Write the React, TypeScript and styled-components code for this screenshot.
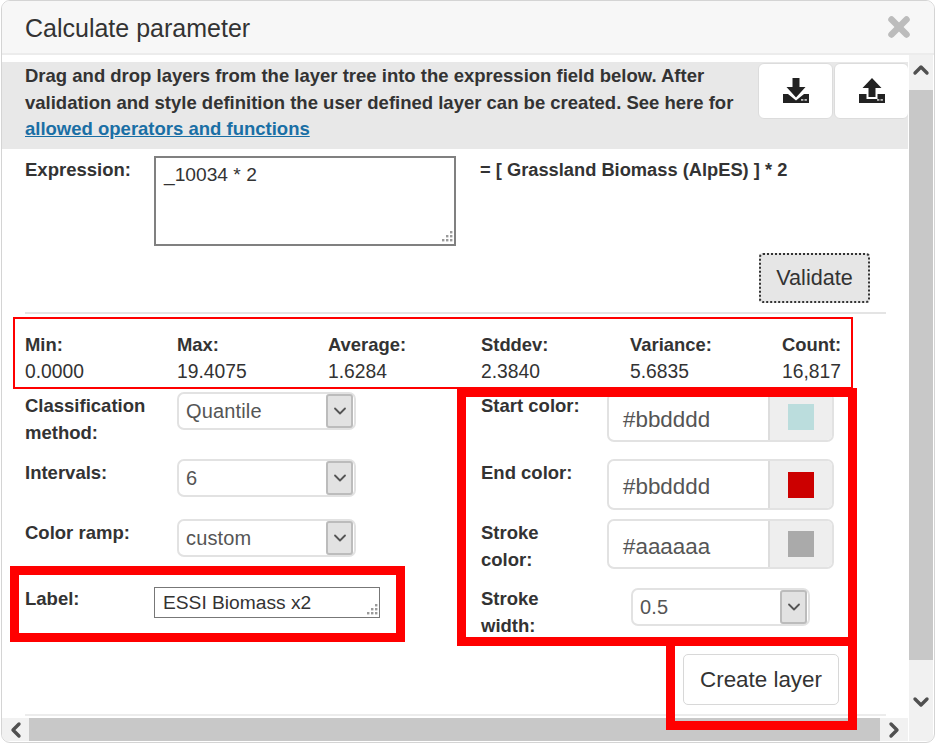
import React from "react";
import styled, { createGlobalStyle } from "styled-components";
import { ChevronDown, ChevronLeft, ChevronRight, ChevronUp, X } from "lucide-react";

const GlobalStyle = createGlobalStyle`
  html, body {
    margin: 0;
    background: #fff;
  }
  body {
    font-family: "Liberation Sans", Arial, sans-serif;
    color: #333;
  }
`;

const stats = [
  ["Min:", "0.0000"],
  ["Max:", "19.4075"],
  ["Average:", "1.6284"],
  ["Stddev:", "2.3840"],
  ["Variance:", "5.6835"],
  ["Count:", "16,817"],
];

function ResizeHandle() {
  return (
    <Handle viewBox="0 0 14 14" width="14" height="14">
      {[[11, 2], [7, 6], [11, 6], [3, 10], [7, 10], [11, 10]].map(([x, y]) => (
        <rect key={`${x}-${y}`} x={x} y={y} width="2.4" height="2.4" fill="#9a9a9a" />
      ))}
    </Handle>
  );
}

function TrayIcon({ up }: { up?: boolean }) {
  return (
    <svg viewBox="0 0 26 26" width="26" height="26">
      {up ? (
        <>
          <path d="M13 0 L22.5 10 H16.5 V19 H9.5 V10 H3.5 Z" fill="#222" />
          <path d="M0 16 H7.5 V21 H18.5 V16 H26 V25 H0 Z" fill="#222" />
        </>
      ) : (
        <>
          <path d="M9.5 0 H16.5 V9 H22.5 L13 19.5 L3.5 9 H9.5 Z" fill="#222" />
          <path d="M0 16 H5 L13 22.5 L21 16 H26 V25 H0 Z" fill="#222" />
        </>
      )}
      <rect x="18" y="21" width="2.4" height="1.8" fill="#bbb" />
      <rect x="21.5" y="21" width="2.4" height="1.8" fill="#bbb" />
    </svg>
  );
}

function Select({ value, width }: { value: string; width: number }) {
  return (
    <SelectBox style={{ width }}>
      <SelectValue>{value}</SelectValue>
      <SelectArrow>
        <ChevronDown size={20} strokeWidth={2.2} color="#555" />
      </SelectArrow>
    </SelectBox>
  );
}

function ColorInput({ value, color, height }: { value: string; color: string; height: number }) {
  return (
    <ColorGroup $height={height}>
      <ColorValue>{value}</ColorValue>
      <ColorAddon>
        <Swatch $color={color} />
      </ColorAddon>
    </ColorGroup>
  );
}

export default function App() {
  return (
    <Page>
      <GlobalStyle />
      <Modal>
        <Header>
          <Title>Calculate parameter</Title>
          <CloseIcon>
            <X size={30} strokeWidth={5.2} color="#bcbcbc" />
          </CloseIcon>
        </Header>
        <Body>
          <Main>
            <Content>
              <Intro>
                <IntroText>
                  Drag and drop layers from the layer tree into the expression field below. After
                  validation and style definition the user defined layer can be created. See here
                  for <br />
                  <IntroLink href="#">allowed operators and functions</IntroLink>
                </IntroText>
                <IconButtons>
                  <IconButton>
                    <TrayIcon />
                  </IconButton>
                  <IconButton>
                    <TrayIcon up />
                  </IconButton>
                </IconButtons>
              </Intro>

              <ExpressionRow>
                <FieldLabel $width={129}>Expression:</FieldLabel>
                <ExpressionBox>
                  _10034 * 2
                  <ResizeHandle />
                </ExpressionBox>
                <Formula>= [ Grassland Biomass (AlpES) ] * 2</Formula>
              </ExpressionRow>

              <ValidateRow>
                <ValidateButton>Validate</ValidateButton>
              </ValidateRow>

              <Divider />

              <StatsGrid>
                {stats.map(([label, value]) => (
                  <div key={label}>
                    <StatLabel>{label}</StatLabel>
                    <StatValue>{value}</StatValue>
                  </div>
                ))}
              </StatsGrid>

              <FormGrid>
                <Field>
                  <FieldLabel $width={152}>
                    Classification
                    <br />
                    method:
                  </FieldLabel>
                  <Select value="Quantile" width={179} />
                </Field>
                <Field>
                  <FieldLabel $width={126}>Start color:</FieldLabel>
                  <ColorInput value="#bbdddd" color="#bbdddd" height={50} />
                </Field>
                <Field>
                  <FieldLabel $width={152}>Intervals:</FieldLabel>
                  <Select value="6" width={179} />
                </Field>
                <Field>
                  <FieldLabel $width={126}>End color:</FieldLabel>
                  <ColorInput value="#bbdddd" color="#cc0000" height={51} />
                </Field>
                <Field>
                  <FieldLabel $width={152}>Color ramp:</FieldLabel>
                  <Select value="custom" width={179} />
                </Field>
                <Field>
                  <FieldLabel $width={126}>
                    Stroke
                    <br />
                    color:
                  </FieldLabel>
                  <ColorInput value="#aaaaaa" color="#aaaaaa" height={50} />
                </Field>
                <Field>
                  <FieldLabel $width={129}>Label:</FieldLabel>
                  <LabelBox>
                    ESSI Biomass x2
                    <ResizeHandle />
                  </LabelBox>
                </Field>
                <Field>
                  <FieldLabel $width={150}>
                    Stroke
                    <br />
                    width:
                  </FieldLabel>
                  <StrokeSelect>
                    <Select value="0.5" width={179} />
                  </StrokeSelect>
                </Field>
              </FormGrid>

              <CreateRow>
                <CreateButton>Create layer</CreateButton>
              </CreateRow>

              <BottomDivider />
            </Content>

            <HorizontalBar>
              <BarButton $width={27}>
                <ChevronLeft size={24} strokeWidth={3.4} color="#505050" />
              </BarButton>
              <HorizontalThumb />
              <BarButton $width={28}>
                <ChevronRight size={24} strokeWidth={3.4} color="#505050" />
              </BarButton>
            </HorizontalBar>
          </Main>

          <VerticalBar>
            <VerticalEnd $height={35}>
              <ChevronUp size={24} strokeWidth={3.4} color="#505050" />
            </VerticalEnd>
            <VerticalThumb />
            <VerticalEnd $height={81}>
              <ChevronDown size={24} strokeWidth={3.4} color="#505050" />
            </VerticalEnd>
          </VerticalBar>
        </Body>
      </Modal>

      <RedFrame $left={13} $top={317} $width={840} $height={72} $border={2} />
      <RedFrame $left={10} $top={566} $width={395} $height={76} $border={9} />
      <RedFrame $left={457} $top={388} $width={400} $height={258} $border={9} />
      <RedFrame $left={666} $top={637} $width={191} $height={93} $border={9} />
    </Page>
  );
}

const Page = styled.div`
  position: relative;
  width: 938px;
  height: 746px;
  overflow: hidden;
`;

const Modal = styled.div`
  box-sizing: border-box;
  width: 934px;
  height: 743px;
  margin: 0 0 0 1px;
  border: 1.5px solid #d4d4d4;
  border-radius: 9px;
  background: #fff;
  overflow: hidden;
`;

const Header = styled.div`
  box-sizing: border-box;
  height: 54px;
  padding-left: 23px;
  display: flex;
  align-items: center;
  justify-content: space-between;
  background: #f7f7f7;
  border-bottom: 2px solid #ececec;
`;

const Title = styled.div`
  padding-top: 1px;
  font-size: 25px;
  line-height: 52px;
  color: #333;
`;

const CloseIcon = styled.div`
  display: flex;
  margin-right: 20px;
`;

const Body = styled.div`
  display: flex;
  height: 686px;
`;

const Main = styled.div`
  width: 906px;
  margin-right: 1px;
  display: flex;
  flex-direction: column;
`;

const Content = styled.div`
  height: 663px;
  padding-top: 7px;
  box-sizing: border-box;
  overflow: hidden;
`;

const Intro = styled.div`
  box-sizing: border-box;
  height: 87px;
  padding-left: 23px;
  background: #e8e8e8;
  display: flex;
`;

const IntroText = styled.div`
  flex: none;
  width: 733px;
  padding-top: 1px;
  font-size: 18.5px;
  font-weight: bold;
  line-height: 26.5px;
`;

const IntroLink = styled.a`
  color: #1a6fa5;
  text-decoration: underline;
`;

const IconButtons = styled.div`
  flex: none;
  display: flex;
  gap: 1px;
  margin-top: 1px;
`;

const IconButton = styled.button`
  box-sizing: border-box;
  width: 75px;
  height: 56px;
  padding: 0;
  display: flex;
  align-items: center;
  justify-content: center;
  background: #fff;
  border: 1.5px solid #dcdcdc;
  border-radius: 6px;
`;

const ExpressionRow = styled.div`
  display: flex;
  margin-top: 7px;
  padding-left: 23px;
`;

const FieldLabel = styled.div<{ $width: number }>`
  flex: none;
  width: ${(p) => p.$width}px;
  padding-top: 1px;
  font-size: 18.5px;
  font-weight: bold;
  line-height: 26.5px;
`;

const ExpressionBox = styled.div`
  position: relative;
  box-sizing: border-box;
  width: 302px;
  height: 90px;
  padding: 3px 8px;
  border: 2px solid #808080;
  font-size: 19.2px;
  line-height: 28px;
`;

const Handle = styled.svg`
  position: absolute;
  right: 1px;
  bottom: 1px;
`;

const Formula = styled.div`
  margin-left: 24px;
  padding-top: 1px;
  font-size: 18.3px;
  font-weight: bold;
  line-height: 26.5px;
`;

const ValidateRow = styled.div`
  margin-top: 7px;
  padding-left: 757px;
`;

const ValidateButton = styled.button`
  box-sizing: border-box;
  display: block;
  width: 111px;
  height: 50px;
  padding: 0;
  font-family: inherit;
  font-size: 21.6px;
  color: #333;
  background: #e6e6e6;
  border: 2px dotted #333;
  border-radius: 4px;
`;

const Divider = styled.div`
  height: 2px;
  width: 861px;
  margin: 9px 0 0 23px;
  background: #e4e4e4;
`;

const StatsGrid = styled.div`
  display: grid;
  grid-template-columns: 152px 151px 153px 149px 152px auto;
  margin-top: 18px;
  padding-left: 23px;
`;

const StatLabel = styled.div`
  font-size: 18.4px;
  font-weight: bold;
  line-height: 26.5px;
`;

const StatValue = styled.div`
  font-size: 19.3px;
  line-height: 26.5px;
`;

const FormGrid = styled.div`
  display: grid;
  grid-template-columns: 456px 1fr;
  grid-template-rows: 67px 60px 66px 53px;
  margin-top: 7px;
  padding-left: 23px;
`;

const Field = styled.div`
  display: flex;
  align-items: flex-start;
`;

const SelectBox = styled.div`
  box-sizing: border-box;
  height: 38px;
  padding-right: 1px;
  display: flex;
  align-items: stretch;
  background: #fff;
  border: 2px solid #e2e2e2;
  border-radius: 7px;
`;

const SelectValue = styled.div`
  flex: 1;
  padding-left: 7px;
  font-size: 20px;
  letter-spacing: 0.15px;
  line-height: 34px;
  color: #555;
`;

const SelectArrow = styled.div`
  box-sizing: border-box;
  width: 27px;
  display: flex;
  align-items: center;
  justify-content: center;
  background: #e2e2e2;
  border: 2px solid #bcbcbc;
  border-radius: 3px;
`;

const StrokeSelect = styled.div`
  margin-top: 3px;
`;

const ColorGroup = styled.div<{ $height: number }>`
  box-sizing: border-box;
  width: 227px;
  height: ${(p) => p.$height}px;
  display: flex;
  border: 2px solid #e2e2e2;
  border-radius: 7px;
  overflow: hidden;
`;

const ColorValue = styled.div`
  flex: 1;
  display: flex;
  align-items: center;
  padding: 5px 0 0 14px;
  font-size: 22.4px;
  color: #555;
`;

const ColorAddon = styled.div`
  box-sizing: border-box;
  width: 64px;
  display: flex;
  align-items: center;
  justify-content: center;
  background: #eee;
  border-left: 2px solid #ddd;
`;

const Swatch = styled.div<{ $color: string }>`
  width: 26px;
  height: 26px;
  background: ${(p) => p.$color};
`;

const LabelBox = styled.div`
  position: relative;
  box-sizing: border-box;
  width: 226px;
  height: 31px;
  margin-top: 2px;
  padding-left: 8px;
  border: 1.5px solid #777;
  font-size: 19.2px;
  line-height: 30px;
`;

const CreateRow = styled.div`
  margin-top: 16px;
  padding-left: 681px;
`;

const CreateButton = styled.button`
  box-sizing: border-box;
  display: block;
  width: 156px;
  height: 51px;
  padding: 0;
  font-family: inherit;
  font-size: 22.4px;
  color: #333;
  background: #fff;
  border: 1.5px solid #d8d8d8;
  border-radius: 5px;
`;

const BottomDivider = styled(Divider)`
  margin-top: 9px;
  background: #ececec;
`;

const HorizontalBar = styled.div`
  height: 23px;
  display: flex;
  background: #f1f1f1;
`;

const BarButton = styled.div<{ $width: number }>`
  flex: none;
  width: ${(p) => p.$width}px;
  display: flex;
  align-items: center;
  justify-content: center;
`;

const HorizontalThumb = styled.div`
  flex: 1;
  background: #c8c8c8;
`;

const VerticalBar = styled.div`
  flex: none;
  width: 24px;
  display: flex;
  flex-direction: column;
  background: #f1f1f1;
`;

const VerticalEnd = styled.div<{ $height: number }>`
  flex: none;
  height: ${(p) => p.$height}px;
  display: flex;
  align-items: flex-start;
  justify-content: center;
  padding-top: 3px;
  box-sizing: border-box;
  &:last-child {
    align-items: center;
  }
`;

const VerticalThumb = styled.div`
  flex: 1;
  background: #c8c8c8;
`;

const RedFrame = styled.div<{ $left: number; $top: number; $width: number; $height: number; $border: number }>`
  position: absolute;
  box-sizing: border-box;
  left: ${(p) => p.$left}px;
  top: ${(p) => p.$top}px;
  width: ${(p) => p.$width}px;
  height: ${(p) => p.$height}px;
  border: ${(p) => p.$border}px solid #ff0000;
  pointer-events: none;
`;
